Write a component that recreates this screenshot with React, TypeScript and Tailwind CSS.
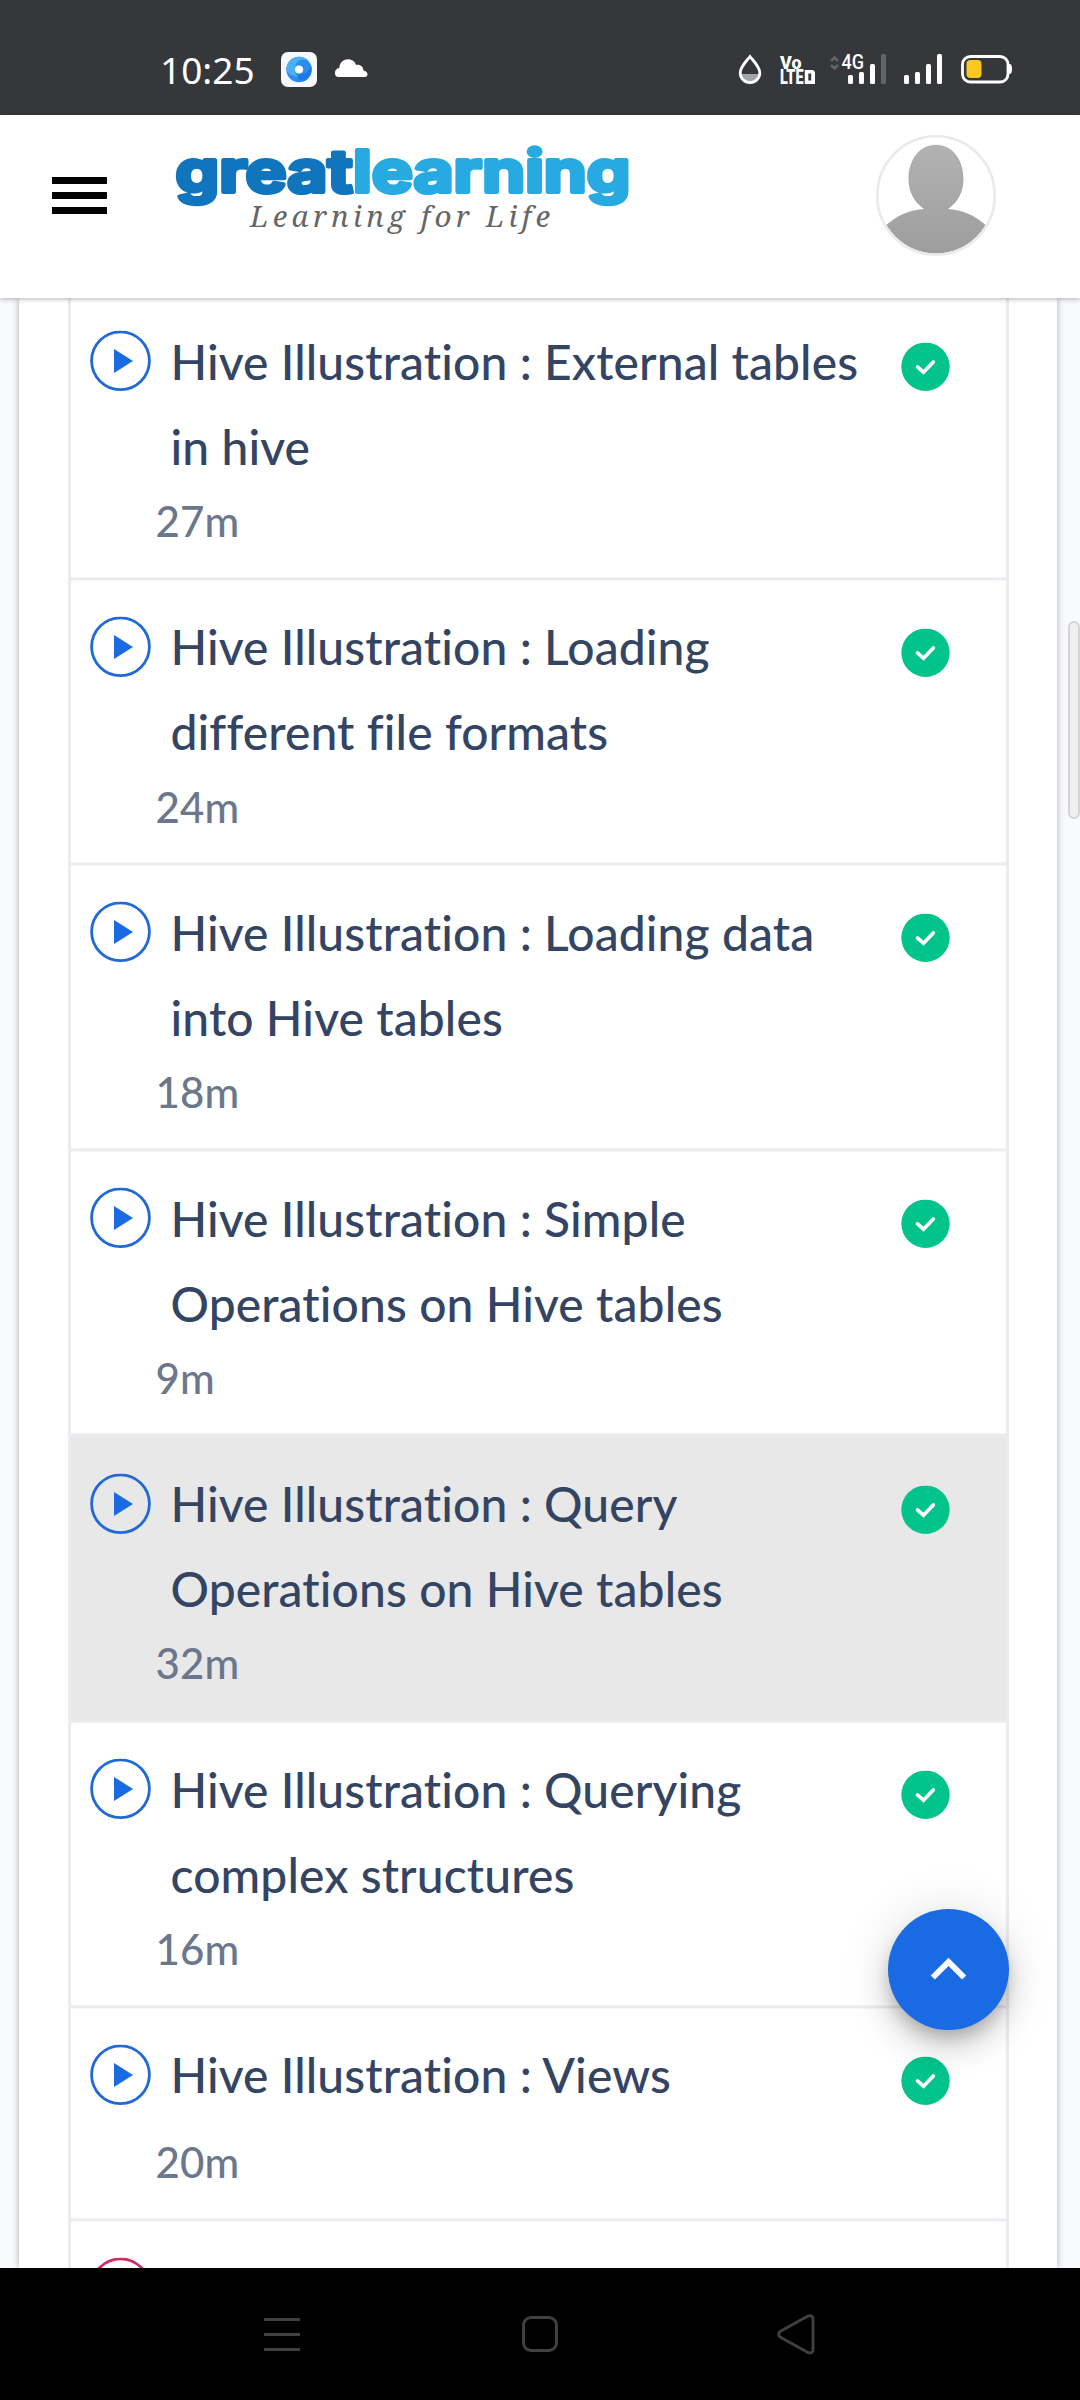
import React from "react";

type Lesson = { lines: string[]; duration: string; active?: boolean };

const lessons: Lesson[] = [
  { lines: ["Hive Illustration : External tables", "in hive"], duration: "27m" },
  { lines: ["Hive Illustration : Loading", "different file formats"], duration: "24m" },
  { lines: ["Hive Illustration : Loading data", "into Hive tables"], duration: "18m" },
  { lines: ["Hive Illustration : Simple", "Operations on Hive tables"], duration: "9m" },
  { lines: ["Hive Illustration : Query", "Operations on Hive tables"], duration: "32m", active: true },
  { lines: ["Hive Illustration : Querying", "complex structures"], duration: "16m" },
  { lines: ["Hive Illustration : Views"], duration: "20m" },
];

function StatusBar() {
  return (
    <div className="flex h-[115px] shrink-0 items-start bg-[#36373b] text-white">
      <div className="mt-[44.500px] ml-[160px] w-[121px] font-['Noto_Sans'] text-[37px] leading-[50px]">10:25</div>
      <svg className="mt-[52px]" width="36" height="36" viewBox="0 0 36 36">
        <rect width="36" height="35" rx="7" fill="#f6f8fe" />
        <circle cx="18" cy="17.5" r="12.7" fill="#2b8df0" />
        <path d="M5.4 16.5A12.7 12.7 0 0 1 27 8.6C20 5 13 10 13.8 18.5C14 21.5 16 24 18 25C11 25 6 21 5.4 16.5Z" fill="#49b3f6" />
        <path d="M18 22C24 23 29 19 29.6 12.5A12.7 12.7 0 0 1 23.5 28.9C17 29 15 25 18 22Z" fill="#1e78e6" />
        <circle cx="18" cy="17.5" r="4.1" fill="#fff" />
      </svg>
      <svg className="mt-[59px] ml-[18px]" width="33" height="18" viewBox="0 0 33 18">
        <path d="M3.5 18A3.8 3.8 0 0 1 0 14C0 11 1.5 9.400 4.300 9C4.500 4 8 .3 12.800 .3C17 .3 19.800 2.500 21 6C25.200 5.200 28 7.500 28.500 11.500C31 12 32.500 13.500 32.500 15.300C32.500 17 31.300 18 29.800 18Z" fill="#fff" />
      </svg>
      <svg className="mt-[53px] ml-[370px]" width="25" height="32" viewBox="0 0 25 32">
        <path d="M2.500 21H22.500C21.500 26.500 17.500 29.500 12.500 29.500S3.500 26.500 2.500 21Z" fill="#a3a4a6" />
        <path d="M12 3.500C8 8.500 2.200 14 2.200 20A9.800 9.600 0 0 0 21.800 20C21.800 14 16 8.500 12 3.500Z" fill="none" stroke="#fff" strokeWidth="2.800" />
      </svg>
      <svg className="mt-[53px] ml-[17px] overflow-visible" width="36" height="32" viewBox="0 0 36 32" fill="#fff" fontFamily="Roboto" fontWeight="900">
        <text x="0" y="15.500" fontSize="19" textLength="21.500" lengthAdjust="spacingAndGlyphs">Vo</text>
        <text x="0" y="31" fontSize="20" textLength="23.500" lengthAdjust="spacingAndGlyphs">LTE</text>
        <path d="M24.800 17H33L35 19V31H24.800ZM28.300 20.500V27.500H31.200V20.500Z" fillRule="evenodd" />
      </svg>
      <svg className="mt-[53px] ml-[13px] overflow-visible" width="58" height="32" viewBox="0 0 58 32">
        <g fill="none" stroke="#636468" strokeWidth="2.600">
          <path d="M2 8L5.500 4.500L9 8M2 12L5.500 15.500L9 12" />
        </g>
        <text x="12.500" y="16" fill="#fff" fontFamily="Roboto" fontWeight="500" fontSize="20.500" textLength="22.500" lengthAdjust="spacingAndGlyphs">4G</text>
        <g fill="#fff">
          <rect x="19" y="22" width="5" height="9" rx="1.500" />
          <rect x="30" y="19" width="5" height="12" rx="1.500" />
          <rect x="41" y="11" width="5" height="20" rx="1.500" />
        </g>
        <rect x="52" y="1" width="5" height="30" rx="1.500" fill="#636468" />
      </svg>
      <svg className="mt-[53px] ml-[16px]" width="40" height="32" viewBox="0 0 40 32" fill="#fff">
        <rect x="1" y="22" width="5" height="9" rx="1.500" />
        <rect x="12" y="19" width="5" height="12" rx="1.500" />
        <rect x="23" y="11" width="5" height="20" rx="1.500" />
        <rect x="34" y="1" width="5" height="30" rx="1.500" />
      </svg>
      <svg className="mt-[54px] ml-[18px]" width="52" height="30" viewBox="0 0 52 30">
        <rect x="1.500" y="2.500" width="45.500" height="25.500" rx="8" fill="none" stroke="#fff" strokeWidth="2.800" />
        <path d="M47 10H49Q51 10.500 51 15T49 20H47Z" fill="#fff" />
        <rect x="5.500" y="6" width="15" height="18" rx="4" fill="#fcc91f" />
      </svg>
    </div>
  );
}

function Header() {
  return (
    <header className="relative z-10 flex h-[183px] shrink-0 items-start bg-white shadow-[0_1px_5px_rgba(0,0,0,0.3)]">
      <div className="mt-[62px] ml-[52px] flex flex-col gap-[8.400px]">
        <div className="h-[6.700px] w-[55px] bg-black" />
        <div className="h-[6.700px] w-[55px] bg-black" />
        <div className="h-[6.700px] w-[55px] bg-black" />
      </div>
      <svg className="mt-[20px] ml-[63px]" width="470" height="105" viewBox="0 0 470 105">
        <text x="5.500" y="56.500" fontFamily="Inter" fontWeight="700" fontSize="58" textLength="455" lengthAdjust="spacingAndGlyphs" strokeWidth="4" strokeLinejoin="round">
          <tspan fill="#1075bd" stroke="#1075bd">great</tspan><tspan fill="#27aae1" stroke="#27aae1">learning</tspan>
        </text>
        <text x="80" y="91.500" fontFamily="Noto Serif" fontStyle="italic" fontSize="29.500" fill="#666" textLength="300" lengthAdjust="spacing">Learning for Life</text>
      </svg>
      <svg className="mt-[20px] ml-[236px]" width="120" height="121" viewBox="0 0 120 121">
        <defs>
          <linearGradient id="person" x1="0" y1="0" x2="0" y2="1">
            <stop offset="0" stopColor="#b2b2b2" />
            <stop offset="1" stopColor="#9d9d9d" />
          </linearGradient>
          <clipPath id="disc"><ellipse cx="60" cy="60.500" rx="57.500" ry="58" /></clipPath>
        </defs>
        <path clipPath="url(#disc)" fill="url(#person)" d="M60 9.700C76 9.700 87.500 24 87.500 44C87.500 58 81 68 72 74C86 75 98 79 113 93V121H7V93C22 79 34 75 48 74C39 68 32.500 58 32.500 44C32.500 24 44 9.700 60 9.700Z" />
        <ellipse cx="60" cy="60.500" rx="58.700" ry="59.200" fill="none" stroke="#e9eaee" strokeWidth="2.600" />
      </svg>
    </header>
  );
}

function PlayIcon() {
  return (
    <svg className="mt-[36.300px] ml-[19px] shrink-0" width="61" height="61" viewBox="0 0 61 61">
      <circle cx="30.500" cy="30.300" r="28.900" fill="none" stroke="#2169d6" strokeWidth="2.800" />
      <path d="M24 18.500L43 30.500L24 42.500Z" fill="#1a6ae4" />
    </svg>
  );
}

function DoneIcon() {
  return (
    <svg className="mt-[48.300px] mr-[56px] ml-auto shrink-0" width="49" height="49" viewBox="0 0 49 49">
      <circle cx="24.500" cy="24.300" r="24.200" fill="#03c38d" />
      <path d="M16.500 24.500L22.500 29.800L32.300 19.500" fill="none" stroke="#fff" strokeWidth="3.600" strokeLinecap="round" />
    </svg>
  );
}

function LessonRow({ lesson }: { lesson: Lesson }) {
  const single = lesson.lines.length === 1;
  return (
    <li className={`flex border-b-[3px] border-[#ebecf0] ${single ? "h-[213px]" : "h-[285.600px]"} ${lesson.active ? "bg-[#e8e8e8]" : ""}`}>
      <PlayIcon />
      <div className="pt-[24.900px] font-medium tracking-[0.1px] [font-variant-ligatures:none]">
        <div className="ml-[19.500px] text-[48px] leading-[85px] whitespace-nowrap text-[#344563]">
          {lesson.lines.map((line) => (
            <div key={line}>{line}</div>
          ))}
        </div>
        <div className={`ml-[4.500px] text-[42px] leading-[50.400px] text-[#6b778c] ${single ? "mt-[19.600px]" : "mt-[7.200px]"}`}>{lesson.duration}</div>
      </div>
      <DoneIcon />
    </li>
  );
}

function NavBar() {
  return (
    <nav className="flex h-[132px] shrink-0 items-start bg-black">
      <div className="mt-[50px] ml-[264px] flex flex-col gap-[12px]">
        <div className="h-[3px] w-[36px] bg-[#404040]" />
        <div className="h-[3px] w-[36px] bg-[#404040]" />
        <div className="h-[3px] w-[36px] bg-[#404040]" />
      </div>
      <div className="mt-[48px] ml-[222px] size-[36px] rounded-[9px] border-[3px] border-[#404040]" />
      <svg className="mt-[46px] ml-[219px]" width="38" height="41" viewBox="0 0 38 41">
        <path d="M3 17.600L31 2.100Q36 .5 36 5.500V35.500Q36 40 31 38.500L3 23Q.3 20.300 3 17.600Z" fill="none" stroke="#404040" strokeWidth="2.900" strokeLinejoin="round" />
      </svg>
    </nav>
  );
}

export default function App() {
  return (
    <div className="relative flex h-[2400px] w-[1080px] flex-col overflow-hidden bg-[#f8fafd] font-[Lato,sans-serif]">
      <StatusBar />
      <Header />
      <main className="min-h-0 flex-1 overflow-hidden pr-[23px] pl-[19px]">
        <div className="h-full bg-white pr-[48.500px] pl-[49px] shadow-[0_0_7px_rgba(0,0,0,0.3)]">
          <ul className="h-[1990px] -translate-y-[3.600px] border-x-[3px] border-[#ebecf0]">
            {lessons.map((lesson, i) => (
              <LessonRow key={i} lesson={lesson} />
            ))}
            <li className="flex">
              <svg className="mt-[36px] ml-[19px]" width="61" height="61" viewBox="0 0 61 61">
                <circle cx="30.500" cy="30.300" r="28.900" fill="none" stroke="#d42a62" strokeWidth="2.800" />
              </svg>
            </li>
          </ul>
        </div>
      </main>
      <NavBar />
      <div className="absolute top-[621px] right-0 h-[198px] w-[12px] rounded-[6px] border-2 border-[#d2d4d6] bg-[#f0f0f0]" />
      <button className="absolute top-[1908.500px] left-[888px] flex size-[121px] items-center justify-center rounded-full bg-[#1a6ae4] shadow-[0_9px_15px_-3px_rgba(0,0,0,0.2),0_18px_30px_rgba(0,0,0,0.14),0_3px_54px_rgba(0,0,0,0.12)]">
        <svg width="71" height="71" viewBox="0 0 24 24" fill="#fff">
          <path d="M12 8l-6 6 1.410 1.410L12 10.830l4.590 4.580L18 14z" />
        </svg>
      </button>
    </div>
  );
}
